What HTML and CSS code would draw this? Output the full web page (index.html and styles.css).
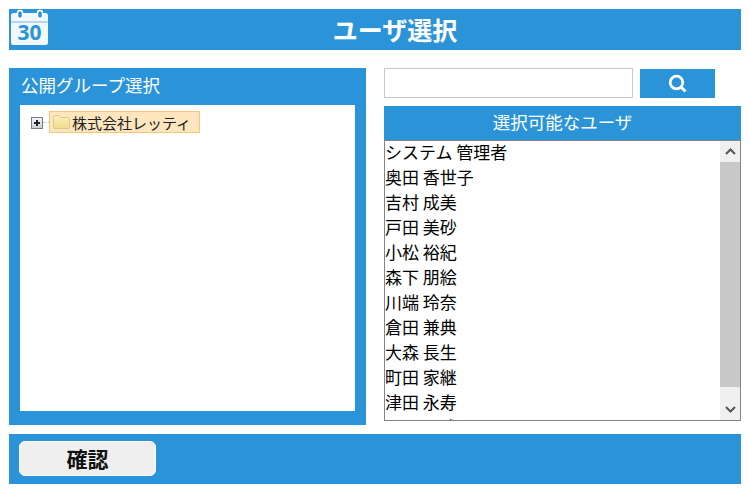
FILE: index.html
```html
<!DOCTYPE html>
<html lang="ja">
<head>
<meta charset="utf-8">
<title>ユーザ選択</title>
<link rel="stylesheet" href="styles.css">
</head>
<body>
<div class="page">
  <header class="title-bar">
    <svg class="cal-icon" width="41" height="38" viewBox="0 0 41 38">
      <rect x="2" y="4" width="37" height="32" rx="2.500" fill="#fff" opacity=".93"/>
      <rect x="2" y="12.500" width="37" height="1" fill="#2b94d8" opacity=".6"/>
      <rect x="8.500" y="1.500" width="5" height="8" rx="2.500" fill="#2b94d8" stroke="#fff" stroke-width="1.500"/>
      <rect x="28.500" y="1.500" width="5" height="8" rx="2.500" fill="#2b94d8" stroke="#fff" stroke-width="1.500"/>
      <text x="20.500" y="31" text-anchor="middle" class="cal-num">30</text>
    </svg>
    <h1 class="title">ユーザ選択</h1>
  </header>
  <main class="columns">
    <section class="group-panel">
      <h2 class="group-heading">公開グループ選択</h2>
      <div class="tree">
        <div class="tree-row">
          <span class="expander"></span>
          <span class="connector"></span>
          <span class="node">
            <svg class="folder" width="19" height="16" viewBox="0 0 19 16">
              <defs>
                <linearGradient id="folderFill" x1="0" y1="0" x2="0" y2="1">
                  <stop offset="0" stop-color="#fbf2c0"/>
                  <stop offset="1" stop-color="#f0da8c"/>
                </linearGradient>
              </defs>
              <path fill="url(#folderFill)" stroke="#dfc97f" d="M1.500 13.500V2.500a1 1 0 0 1 1-1h4l2 2h8a1 1 0 0 1 1 1v9a1 1 0 0 1-1 1h-14a1 1 0 0 1-1-1z"/>
            </svg>
            <span>株式会社レッティ</span>
          </span>
        </div>
      </div>
    </section>
    <section class="user-column">
      <div class="search-row">
        <input class="search-input" type="text">
        <button class="search-button" type="button" aria-label="検索">
          <svg width="22" height="20" viewBox="0 0 22 20">
            <circle cx="9.500" cy="8.500" r="6.300" fill="none" stroke="#fff" stroke-width="2.800"/>
            <path d="M14 13l4.500 4.500" stroke="#fff" stroke-width="3" fill="none"/>
          </svg>
        </button>
      </div>
      <h2 class="users-heading">選択可能なユーザ</h2>
      <div class="list-box">
        <ul class="users">
          <li>システム 管理者</li>
          <li>奥田 香世子</li>
          <li>吉村 成美</li>
          <li>戸田 美砂</li>
          <li>小松 裕紀</li>
          <li>森下 朋絵</li>
          <li>川端 玲奈</li>
          <li>倉田 兼典</li>
          <li>大森 長生</li>
          <li>町田 家継</li>
          <li>津田 永寿</li>
          <li>西口 正武</li>
        </ul>
        <div class="scrollbar">
          <svg class="arrow" width="17" height="21" viewBox="0 0 17 21"><path d="M4 13l4.500-4.500L13 13" fill="none" stroke="#555" stroke-width="2"/></svg>
          <div class="thumb"></div>
          <svg class="arrow" width="17" height="21" viewBox="0 0 17 21"><path d="M4 8l4.500 4.500L13 8" fill="none" stroke="#555" stroke-width="2"/></svg>
        </div>
      </div>
    </section>
  </main>
  <footer class="footer-bar">
    <button class="confirm" type="button">確認</button>
  </footer>
</div>
</body>
</html>
```
FILE: styles.css
```css
* { box-sizing: border-box; }
html, body { margin: 0; padding: 0; background: #fff; }
body { font-family: "Noto Sans CJK JP", "Noto Sans", sans-serif; overflow: hidden; }
h1, h2, ul { margin: 0; padding: 0; font-weight: normal; }
.page { width: 750px; height: 490px; padding: 9px 9px 6px; display: flex; flex-direction: column; }
.title-bar { position: relative; height: 41px; background: #2b94d8; display: flex; align-items: center; justify-content: center; padding-left: 40px; flex: none; }
.cal-icon { position: absolute; left: 0; top: 0; }
.cal-num { font: bold 21px "Open Sans", "Liberation Sans", sans-serif; fill: #2b94d8; }
.title { color: #fff; font-size: 25px; font-weight: bold; line-height: 1; }
.columns { display: flex; margin-top: 18px; flex: none; height: 357px; }
.group-panel { width: 357px; height: 357px; background: #2b94d8; padding: 0 11px 14px; display: flex; flex-direction: column; }
.group-heading { height: 37px; color: #fff; font-size: 17.500px; line-height: 34px; padding-left: 1px; flex: none; }
.tree { flex: 1; background: #fff; padding: 6px 0 0 11px; }
.tree-row { display: flex; align-items: center; height: 22px; }
.expander { position: relative; width: 12px; height: 12px; margin-top: 1px; border: 1px solid #777d88; background: linear-gradient(#f4f5f8, #c9ced9); flex: none; }
.expander::before { content: ""; position: absolute; left: 2px; top: 4px; width: 6px; height: 2px; background: #222; }
.expander::after { content: ""; position: absolute; left: 4px; top: 2px; width: 2px; height: 6px; background: #222; }
.connector { width: 6px; border-top: 1px dotted #c4c4c4; flex: none; }
.node { height: 22px; width: 151px; display: flex; align-items: center; padding-left: 2px; background: #fde6bd; border: 1px solid #f5c67c; font-size: 15px; color: #222; white-space: nowrap; }
.folder { flex: none; margin-right: 1px; }
.user-column { margin-left: 18px; width: 357px; display: flex; flex-direction: column; }
.search-row { display: flex; align-items: flex-start; height: 38px; flex: none; }
.search-input { width: 249px; height: 30px; border: 1px solid #c9c9c9; background: #fff; padding: 0; margin: 0; outline: none; }
.search-button { width: 75px; height: 29px; margin: 1px 0 0 7px; padding: 0; border: 0; background: #2b94d8; display: flex; align-items: center; justify-content: center; }
.users-heading { height: 34px; background: #2b94d8; color: #fff; font-size: 17.500px; line-height: 31px; text-align: center; flex: none; }
.list-box { height: 281px; border: 1px solid #82868c; display: flex; overflow: hidden; background: #fff; flex: none; }
.users { flex: 1; list-style: none; font-size: 17px; color: #000; overflow: hidden; }
.users li { height: 25px; line-height: 22px; white-space: nowrap; }
.scrollbar { width: 20px; background: #f0f0f0; display: flex; flex-direction: column; align-items: center; flex: none; }
.arrow { flex: none; }
.thumb { width: 20px; height: 225px; background: #c8c8c8; }
.arrow:last-child { margin-top: auto; }
.footer-bar { margin-top: 9px; height: 50px; background: #2b94d8; padding: 7px 10px 8px; flex: none; }
.confirm { display: block; width: 137px; height: 35px; padding: 0; border: 1px solid #fff; border-radius: 6px; background: #efefef; color: #111; font-family: inherit; font-size: 21px; font-weight: bold; line-height: 1; }
```
